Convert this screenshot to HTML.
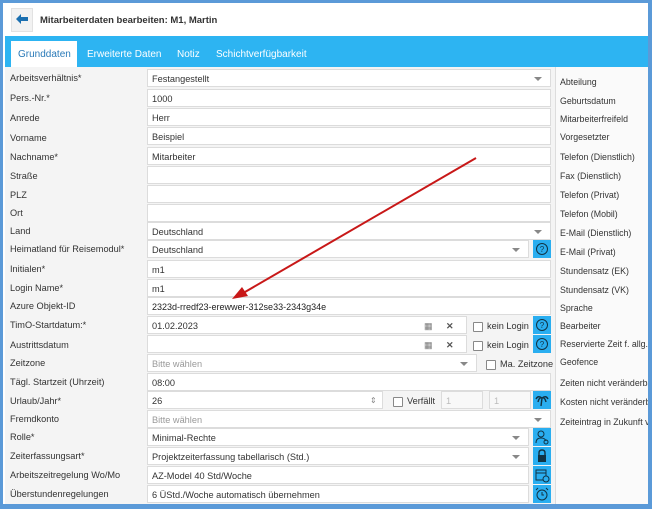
<!DOCTYPE html>
<html><head><meta charset="utf-8"><style>
*{box-sizing:border-box;margin:0;padding:0}
body{width:652px;height:509px;overflow:hidden;background:#5b9ad8;font-family:"Liberation Sans",sans-serif;font-size:9.2px;color:#333;position:relative}
.a{position:absolute}
#win{left:3px;top:3px;width:645px;height:501px;background:#fff}
#hdr{left:3px;top:3px;width:645px;height:33px;background:#fff}
#tabs{left:5px;top:36px;width:643px;height:31px;background:#2db4f2}
.tab{top:49px;color:#fff;font-size:10px}
#left{left:5px;top:67px;width:550px;height:437px;background:#f4f4f4}
#right{left:555px;top:67px;width:93px;height:437px;background:#fafafa;border-left:1px solid #ddd}
.lb{left:10px;white-space:nowrap}
.rl{left:560px;white-space:nowrap;font-size:8.8px}
.in{background:#fff;border:1px solid #dcdcdc;height:18px;padding-left:4px;padding-top:1px;line-height:16px;white-space:nowrap;overflow:hidden}
.dd::after{content:"";position:absolute;right:8px;top:7px;border-left:4px solid transparent;border-right:4px solid transparent;border-top:4px solid #888}
.btn{width:18px;height:18px;background:#2aaef0;left:533px}
.cb{width:10px;height:10px;border:1px solid #888;background:#fff;border-radius:1px}
.ph{color:#999}
</style></head><body>
<div class="a" id="win"></div>
<div class="a" id="hdr"></div>
<div class="a" style="left:11px;top:8px;width:22px;height:24px;background:#f2f2f2;border:1px solid #e2e2e2"></div>
<svg class="a" style="left:15px;top:13px" width="14" height="12"><path d="M1 6 L6 1 L6 4 L13 4 L13 8 L6 8 L6 11 Z" fill="#1a6fb0"/></svg>
<div class="a" style="left:40px;top:15px;font-weight:bold;font-size:9.5px;color:#333">Mitarbeiterdaten bearbeiten: M1, Martin</div>
<div class="a" id="tabs"></div>
<div class="a" style="left:11px;top:41px;width:66px;height:26px;background:#fff"></div>
<div class="a tab" style="left:18px;color:#2a7ab8">Grunddaten</div>
<div class="a tab" style="left:87px">Erweiterte Daten</div>
<div class="a tab" style="left:177px">Notiz</div>
<div class="a tab" style="left:216px">Schichtverfügbarkeit</div>
<div class="a" id="left"></div>
<div class="a" id="right"></div>

<div class="a lb" style="top:73px">Arbeitsverhältnis*</div><div class="a in dd" style="left:147px;top:69px;width:404px">Festangestellt</div>
<div class="a lb" style="top:93px">Pers.-Nr.*</div><div class="a in" style="left:147px;top:89px;width:404px">1000</div>
<div class="a lb" style="top:113px">Anrede</div><div class="a in" style="left:147px;top:108px;width:404px">Herr</div>
<div class="a lb" style="top:133px">Vorname</div><div class="a in" style="left:147px;top:127px;width:404px">Beispiel</div>
<div class="a lb" style="top:152px">Nachname*</div><div class="a in" style="left:147px;top:147px;width:404px">Mitarbeiter</div>
<div class="a lb" style="top:171px">Straße</div><div class="a in" style="left:147px;top:166px;width:404px"></div>
<div class="a lb" style="top:190px">PLZ</div><div class="a in" style="left:147px;top:185px;width:404px"></div>
<div class="a lb" style="top:208px">Ort</div><div class="a in" style="left:147px;top:204px;width:404px"></div>
<div class="a lb" style="top:226px">Land</div><div class="a in dd" style="left:147px;top:222px;width:404px">Deutschland</div>
<div class="a lb" style="top:244px">Heimatland für Reisemodul*</div><div class="a in dd" style="left:147px;top:240px;width:382px">Deutschland</div>
<div class="a btn" style="top:240px"><svg width="18" height="18"><circle cx="9" cy="9" r="5.5" fill="none" stroke="#134" stroke-width="1"/><text x="9" y="12" font-size="8" text-anchor="middle" fill="#134">?</text></svg></div>
<div class="a lb" style="top:264px">Initialen*</div><div class="a in" style="left:147px;top:260px;width:404px">m1</div>
<div class="a lb" style="top:283px">Login Name*</div><div class="a in" style="left:147px;top:279px;width:404px">m1</div>
<div class="a lb" style="top:301px">Azure Objekt-ID</div><div class="a in" style="left:147px;top:297px;width:404px;font-size:9px;color:#222">2323d-rredf23-erewwer-312se33-2343g34e</div>
<div class="a lb" style="top:320px">TimO-Startdatum:*</div><div class="a in" style="left:147px;top:316px;width:320px">01.02.2023<span class="a" style="left:276px;top:1px;color:#777">▦</span><span class="a" style="left:298px;top:1px;color:#555;font-weight:bold">✕</span></div>
<div class="a cb" style="left:473px;top:322px"></div><div class="a" style="left:487px;top:321px">kein Login</div>
<div class="a btn" style="top:316px"><svg width="18" height="18"><circle cx="9" cy="9" r="5.5" fill="none" stroke="#134"/><text x="9" y="12" font-size="8" text-anchor="middle" fill="#134">?</text></svg></div>
<div class="a lb" style="top:340px">Austrittsdatum</div><div class="a in" style="left:147px;top:335px;width:320px"><span class="a" style="left:276px;top:1px;color:#777">▦</span><span class="a" style="left:298px;top:1px;color:#555;font-weight:bold">✕</span></div>
<div class="a cb" style="left:473px;top:341px"></div><div class="a" style="left:487px;top:340px">kein Login</div>
<div class="a btn" style="top:335px"><svg width="18" height="18"><circle cx="9" cy="9" r="5.5" fill="none" stroke="#134"/><text x="9" y="12" font-size="8" text-anchor="middle" fill="#134">?</text></svg></div>
<div class="a lb" style="top:358px">Zeitzone</div><div class="a in dd ph" style="left:147px;top:354px;width:330px">Bitte wählen</div>
<div class="a cb" style="left:486px;top:360px"></div><div class="a" style="left:500px;top:359px">Ma. Zeitzone</div>
<div class="a lb" style="top:377px">Tägl. Startzeit (Uhrzeit)</div><div class="a in" style="left:147px;top:373px;width:404px">08:00</div>
<div class="a lb" style="top:396px">Urlaub/Jahr*</div><div class="a in" style="left:147px;top:391px;width:236px">26<span class="a" style="left:222px;top:1px;color:#888;font-size:8px">⇕</span></div>
<div class="a cb" style="left:393px;top:397px"></div><div class="a" style="left:407px;top:396px">Verfällt</div>
<div class="a in ph" style="left:441px;top:391px;width:42px;background:#f8f8f8;color:#bbb">1</div>
<div class="a in ph" style="left:489px;top:391px;width:42px;background:#f8f8f8;color:#bbb">1</div>
<div class="a btn" style="top:391px"><svg width="18" height="18"><path d="M9 7 L8 15 M9 7 Q5 4 3 8 M9 7 Q13 4 15 8 M9 7 Q6 6 5 11 M9 7 Q12 6 13 11" fill="none" stroke="#134" stroke-width="1.4"/></svg></div>
<div class="a lb" style="top:414px">Fremdkonto</div><div class="a in dd ph" style="left:147px;top:410px;width:404px">Bitte wählen</div>
<div class="a lb" style="top:432px">Rolle*</div><div class="a in dd" style="left:147px;top:428px;width:382px">Minimal-Rechte</div>
<div class="a btn" style="top:428px"><svg width="18" height="18"><circle cx="8" cy="6" r="3" fill="none" stroke="#134"/><path d="M3 15 Q3 10 8 10 Q12 10 13 13" fill="none" stroke="#134"/><circle cx="13" cy="14" r="2" fill="none" stroke="#134"/></svg></div>
<div class="a lb" style="top:451px">Zeiterfassungsart*</div><div class="a in dd" style="left:147px;top:447px;width:382px">Projektzeiterfassung tabellarisch (Std.)</div>
<div class="a btn" style="top:447px"><svg width="18" height="18"><path d="M6 8 V6 Q6 3 9 3 Q12 3 12 6 V8" fill="none" stroke="#134" stroke-width="1.4"/><rect x="5" y="8" width="8" height="7" fill="#134"/></svg></div>
<div class="a lb" style="top:470px">Arbeitszeitregelung Wo/Mo</div><div class="a in" style="left:147px;top:466px;width:382px">AZ-Model 40 Std/Woche</div>
<div class="a btn" style="top:466px"><svg width="18" height="18"><rect x="3" y="4" width="10" height="10" fill="none" stroke="#134"/><line x1="3" y1="7" x2="13" y2="7" stroke="#134"/><circle cx="13" cy="13" r="3" fill="#2aaef0" stroke="#134"/></svg></div>
<div class="a lb" style="top:489px">Überstundenregelungen</div><div class="a in" style="left:147px;top:485px;width:382px">6 ÜStd./Woche automatisch übernehmen</div>
<div class="a btn" style="top:485px"><svg width="18" height="18"><circle cx="9" cy="10" r="5" fill="none" stroke="#134"/><path d="M9 7 V10 H11 M3 5 L5 3 M15 5 L13 3" fill="none" stroke="#134"/></svg></div>

<div class="a rl" style="top:77px">Abteilung</div>
<div class="a rl" style="top:96px">Geburtsdatum</div>
<div class="a rl" style="top:114px">Mitarbeiterfreifeld</div>
<div class="a rl" style="top:132px">Vorgesetzter</div>
<div class="a rl" style="top:152px">Telefon (Dienstlich)</div>
<div class="a rl" style="top:171px">Fax (Dienstlich)</div>
<div class="a rl" style="top:190px">Telefon (Privat)</div>
<div class="a rl" style="top:209px">Telefon (Mobil)</div>
<div class="a rl" style="top:228px">E-Mail (Dienstlich)</div>
<div class="a rl" style="top:247px">E-Mail (Privat)</div>
<div class="a rl" style="top:266px">Stundensatz (EK)</div>
<div class="a rl" style="top:285px">Stundensatz (VK)</div>
<div class="a rl" style="top:303px">Sprache</div>
<div class="a rl" style="top:321px">Bearbeiter</div>
<div class="a rl" style="top:339px">Reservierte Zeit f. allg. T</div>
<div class="a rl" style="top:357px">Geofence</div>
<div class="a rl" style="top:378px">Zeiten nicht veränderbar</div>
<div class="a rl" style="top:397px">Kosten nicht veränderbar</div>
<div class="a rl" style="top:417px">Zeiteintrag in Zukunft v</div>
<div class="a" style="left:648px;top:0;width:4px;height:509px;background:#5b9ad8"></div>

<svg class="a" style="left:0;top:0" width="652" height="509">
<line x1="476" y1="158" x2="245" y2="292" stroke="#c81818" stroke-width="2"/>
<path d="M232 299 L242 287 L248 296 Z" fill="#c81818"/>
</svg>
</body></html>
